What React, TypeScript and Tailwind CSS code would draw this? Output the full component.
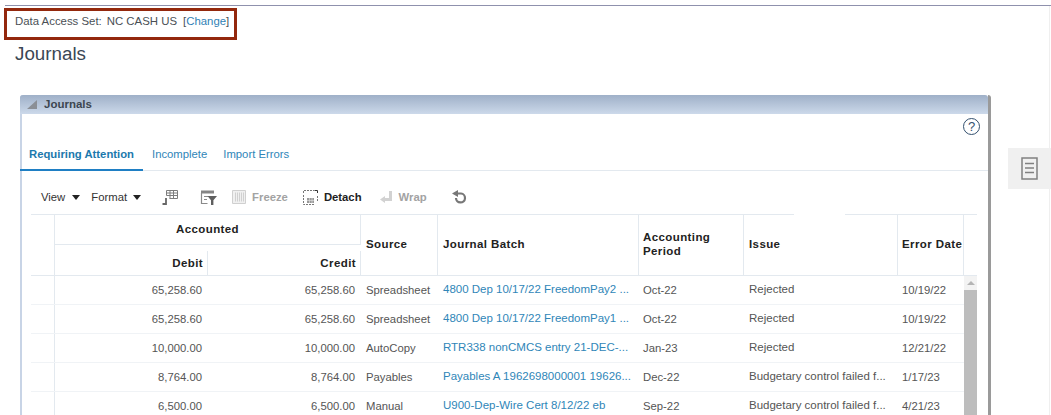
const rows = [
  ["65,258.60", "65,258.60", "Spreadsheet", "4800 Dep 10/17/22 FreedomPay2 ...", "Oct-22", "Rejected", "10/19/22"],
  ["65,258.60", "65,258.60", "Spreadsheet", "4800 Dep 10/17/22 FreedomPay1 ...", "Oct-22", "Rejected", "10/19/22"],
  ["10,000.00", "10,000.00", "AutoCopy", "RTR338 nonCMCS entry 21-DEC-...", "Jan-23", "Rejected", "12/21/22"],
  ["8,764.00", "8,764.00", "Payables", "Payables A 1962698000001 19626...", "Dec-22", "Budgetary control failed f...", "1/17/23"],
  ["6,500.00", "6,500.00", "Manual", "U900-Dep-Wire Cert 8/12/22 eb", "Sep-22", "Budgetary control failed f...", "4/21/23"],
]

function ColumnsIcon() {
  return (
    <svg width="16" height="16" viewBox="0 0 16 16" fill="none" stroke="#7d7d7d">
      <path d="M4.500 1.500h11v8h-8M4.500 1.500v5M4.500 4h11M4.500 6.500h11M8 1.500v8M11.500 1.500v8" />
      <path d="M.5 15h3.500V9" strokeWidth="1.800" stroke="#666" />
    </svg>
  )
}

function FilterIcon() {
  return (
    <svg width="17" height="15" viewBox="0 0 17 15" fill="none">
      <path d="M1 .5h13v3H1z" fill="#858585" />
      <path d="M1.500 3v10.500h6M4 6.500h4M4 9.500h3" stroke="#8a8a8a" strokeWidth="1.200" />
      <path d="M7.500 6h9.500l-3.600 4.200V15h-2.400v-4.800z" fill="#5f5f5f" />
    </svg>
  )
}

function FreezeIcon() {
  return (
    <svg width="14" height="14" viewBox="0 0 14 14" fill="none" stroke="#d0d0d0">
      <path d="M.5.5h13v13H.5z" fill="#f0f0f0" />
      <path d="M3.500 2.500v9M5.500 2.500v9M7.500 2.500v9M9.500 2.500v9M11.500 2.500v9" />
    </svg>
  )
}

function DetachIcon() {
  return (
    <svg width="15" height="15" viewBox="0 0 15 15" fill="none">
      <path d="M.5 3V.5H11M14.500 6v5M.5 5v9.500H11" stroke="#777" strokeDasharray="2 1" />
      <path d="M11.500 .5h3V3" stroke="#333" />
      <path d="M4 8h7v5H4z" fill="#999" />
      <path d="M4 10.500h7M6.500 8v5M9 8v5" stroke="#e5e5e5" strokeWidth=".6" />
    </svg>
  )
}

function WrapIcon() {
  return (
    <svg width="12" height="12" viewBox="0 0 12 12" fill="#d2d2d2">
      <path d="M9 0h3v10H5v2L0 8.500 5 5v2h4z" />
    </svg>
  )
}

function RefreshIcon() {
  return (
    <svg width="15" height="14" viewBox="0 0 15 14" fill="none">
      <path d="M5 3.500h4a4.500 4.500 0 1 1-5 4.500" stroke="#777" strokeWidth="2.200" />
      <path d="M0 3.500L6 0v7z" fill="#777" />
    </svg>
  )
}

export default function App() {
  return (
    <div className="relative h-[415px] w-[1051px] overflow-hidden bg-white font-['Liberation_Sans',Arial,sans-serif] text-[11.300px] text-[#4f4f4f]">
      <span className="absolute bottom-0 right-[1px] top-[6px] w-px bg-[#efefef]" />
      <div className="ml-[5px] mt-[5px] h-px bg-[#8f91ad]" />
      <div className="ml-1 mt-[2px] flex h-[32px] w-[233px] items-center whitespace-nowrap border-[3px] border-[#93280d] pb-[5px] pl-[8px] text-[11.400px] text-[#4a4f55]">
        <span>Data Access Set:</span>
        <span className="ml-[5px]">NC CASH US</span>
        <span className="ml-[6px]">[<span className="text-[#2f7fb5]">Change</span>]</span>
      </div>
      <h1 className="ml-[15px] mt-[2px] text-[18.800px] leading-[24px] text-[#3a4755]">Journals</h1>

      <div className="ml-5 mt-[29px] h-[400px] w-[971px] rounded-t-[3px] border-l-2 border-r-[3px] border-l-[#c8d4e6] border-r-[#9a9a9a]">
        <div className="-ml-[2px] flex h-[19px] items-center rounded-t-[3px] bg-gradient-to-b from-[#9fb0c8] to-[#ccd9ea] pl-[7px]">
          <span className="h-0 w-0 border-b-[9px] border-l-[10px] border-b-[#8b8f96] border-l-transparent" />
          <span className="ml-[7px] text-[11.500px] font-bold text-[#3c4650]">Journals</span>
        </div>

        <div className="flex h-[20px] justify-end pr-[8px] pt-[4px]">
          <span className="flex h-[17px] w-[17px] items-center justify-center rounded-full border border-[#33506e] text-[13px] leading-none text-[#33506e]">?</span>
        </div>

        <div className="mt-[5px] flex h-[32px] border-b border-[#e3e9ef] text-[#2f86b8]">
          <div className="-mb-px -ml-[2px] flex w-[123px] items-center border-b-2 border-[#1f7fc4] pl-[9px] font-bold text-[#1c79ad]">Requiring Attention</div>
          <div className="ml-[9px] flex items-center">Incomplete</div>
          <div className="ml-[16px] flex items-center">Import Errors</div>
        </div>

        <div className="flex h-[43px] items-center pl-[19px] pt-[9px] text-[#333]">
          <span>View</span>
          <span className="ml-[7px] inline-block h-0 w-0 border-x-[4.500px] border-t-[5px] border-x-transparent border-t-[#222]" />
          <span className="ml-[11px]">Format</span>
          <span className="ml-[6px] inline-block h-0 w-0 border-x-[4.500px] border-t-[5px] border-x-transparent border-t-[#222]" />
          <span className="ml-[21px] flex"><ColumnsIcon /></span>
          <span className="ml-[22px] flex"><FilterIcon /></span>
          <span className="ml-[15px] flex"><FreezeIcon /></span>
          <span className="ml-[6px] font-bold text-[#a3a3a3]">Freeze</span>
          <span className="ml-[15px] flex"><DetachIcon /></span>
          <span className="ml-[6px] font-bold text-[#222]">Detach</span>
          <span className="ml-[18px] flex"><WrapIcon /></span>
          <span className="ml-[7px] font-bold text-[#a3a3a3]">Wrap</span>
          <span className="ml-[25px] flex"><RefreshIcon /></span>
        </div>

        <div className="relative ml-[9px] w-[946px]">
          <span className="absolute left-[763px] top-0 h-px w-[51px] bg-white" />
          <div className="grid h-[62px] grid-cols-[24px_153px_153px_77px_201px_105px_154px_66px_13px] border-y border-[#e3e9ef] text-[11.500px] font-bold tracking-[0.4px] text-[#222]">
            <div className="row-span-2 border-r border-[#e3e9ef]" />
            <div className="col-span-2 flex h-[30px] items-center justify-center border-b border-r border-[#e3e9ef] text-center">Accounted</div>
            <div className="row-span-2 flex items-center border-r border-[#e3e9ef] pl-[5px]">Source</div>
            <div className="row-span-2 flex items-center border-r border-[#e3e9ef] pl-[5px]">Journal Batch</div>
            <div className="row-span-2 flex items-center border-r border-[#e3e9ef] pb-[3px] pl-[4px] leading-[14px]">Accounting<br />Period</div>
            <div className="row-span-2 flex items-center border-r border-[#e3e9ef] pl-[5px]">Issue</div>
            <div className="row-span-2 flex items-center whitespace-nowrap border-r border-[#e3e9ef] pl-[4px]">Error Date</div>
            <div className="row-span-2" />
            <div className="flex items-center justify-end border-r border-[#e3e9ef] pr-[4px]">Debit</div>
            <div className="flex items-center justify-end border-r border-[#e3e9ef] pr-[4px]">Credit</div>
          </div>

          <div className="relative">
            {rows.map((r, i) => (
              <div key={i} className="grid h-[29px] grid-cols-[24px_153px_153px_77px_201px_105px_154px_66px_13px] items-center border-b border-[#f0f3f6] text-[#555]">
                <div className="h-full border-r border-[#e3e9ef]" />
                <div className="pr-[6px] text-right">{r[0]}</div>
                <div className="pr-[6px] text-right">{r[1]}</div>
                <div className="pl-[5px]">{r[2]}</div>
                <div className="whitespace-nowrap pl-[5px] text-[11.500px] text-[#2f86b8]">{r[3]}</div>
                <div className="pl-[4px]">{r[4]}</div>
                <div className="whitespace-nowrap pl-[5px] text-[11.500px]">{r[5]}</div>
                <div className="pl-[4px]">{r[6]}</div>
              </div>
            ))}
            <div className="absolute right-0 top-0 flex h-[145px] w-[13px] flex-col bg-[#f3f3f3]">
              <div className="flex h-[14px] items-center justify-center">
                <span className="h-0 w-0 border-x-[4px] border-b-[4px] border-x-transparent border-b-[#b5b5b5]" />
              </div>
              <div className="flex-1 bg-[#bdbdbd]" />
            </div>
          </div>
        </div>
      </div>

      <div className="absolute right-0 top-[148px] flex h-[41px] w-[43px] items-center justify-center bg-[#f0f0f0]">
        <svg width="17" height="23" viewBox="0 0 17 23" fill="none" stroke="#808080">
          <path d="M1 1h15v21H1z" strokeWidth="1.500" />
          <path d="M4 6.500h9M4 11h9M4 15.500h9" strokeWidth="1.500" />
        </svg>
      </div>
    </div>
  )
}
